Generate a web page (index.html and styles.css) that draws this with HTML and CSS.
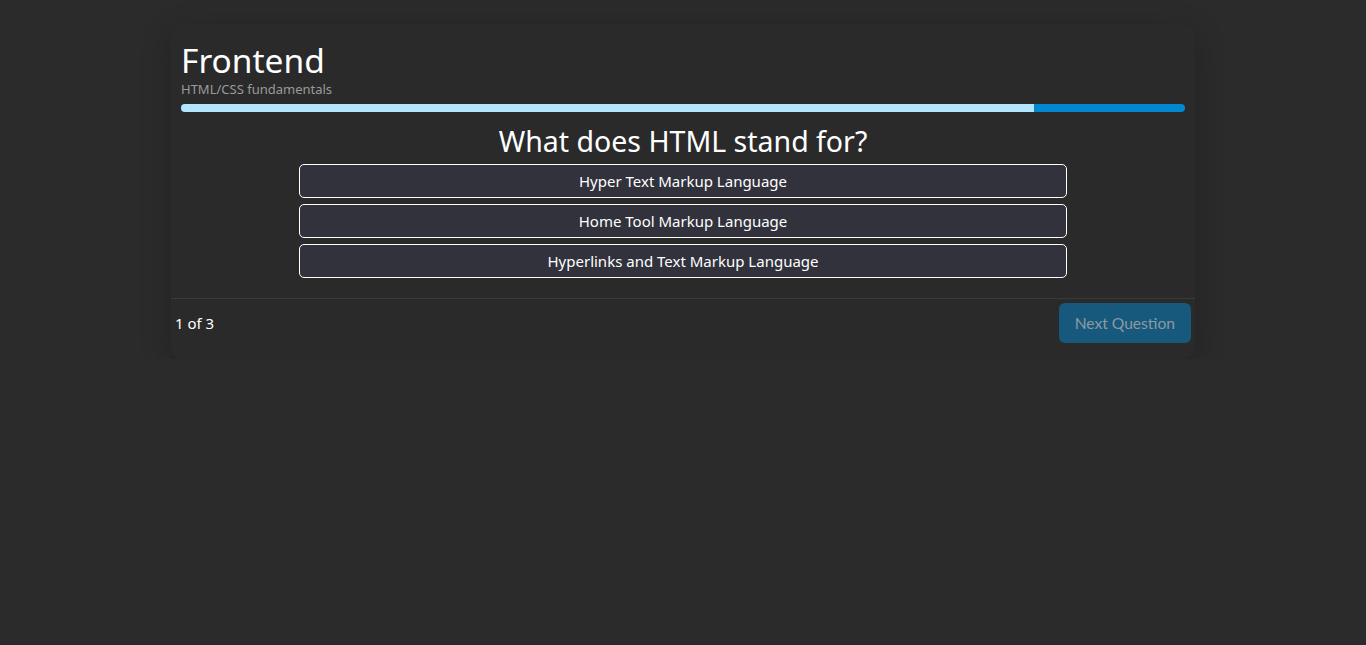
FILE: index.html
```html
<!DOCTYPE html>
<html lang="en">
<head>
<meta charset="utf-8">
<title>Quiz</title>
<link rel="stylesheet" href="styles.css">
</head>
<body>
<main class="card">
  <header class="head">
    <h1 class="title">Frontend</h1>
    <p class="subtitle">HTML/CSS fundamentals</p>
    <div class="progress"><div class="progress-fill" style="width:85%"></div></div>
  </header>
  <section class="question">
    <h2 class="q-text">What does HTML stand for?</h2>
    <div class="options">
      <button class="option">Hyper Text Markup Language</button>
      <button class="option">Home Tool Markup Language</button>
      <button class="option">Hyperlinks and Text Markup Language</button>
    </div>
  </section>
  <footer class="foot">
    <span class="count">1 of 3</span>
    <button class="next" disabled>Next Question</button>
  </footer>
</main>
</body>
</html>
```
FILE: styles.css
```css
* { box-sizing: border-box; }
html, body { margin: 0; }
body {
  background: #2b2b2b;
  font-family: "Noto Sans", "Open Sans", sans-serif;
  color: #fff;
  padding-top: 24px;
}
.card {
  width: 1024px;
  margin: 0 auto;
  background: #2a2a2a;
  border-radius: 12px;
  box-shadow: 0 8px 32px rgba(0,0,0,0.2);
  padding-top: 16px;
}
.head { padding: 0 10px; }
.title {
  margin: 0;
  font-size: 33.5px;
  font-weight: 400;
  line-height: 40px;
}
.subtitle {
  margin: 0;
  font-size: 13px;
  line-height: 16px;
  color: #9a9a9a;
  margin-top: 1px;
}
.progress {
  margin-top: 7px;
  height: 8px;
  border-radius: 4px;
  background: #0288d1;
  overflow: hidden;
}
.progress-fill {
  height: 100%;
  background: #b3e5fc;
}
.question {
  display: flex;
  flex-direction: column;
  align-items: center;
  padding-bottom: 20px;
}
.q-text {
  margin: 9px 0 0;
  font-size: 28.5px;
  font-weight: 400;
  line-height: 40px;
}
.options {
  width: 768px;
  display: flex;
  flex-direction: column;
  gap: 6px;
  margin-top: 3px;
}
.option {
  height: 34px;
  background: #32323c;
  border: 1px solid #fff;
  border-radius: 5px;
  color: #fff;
  font-family: inherit;
  font-size: 15px;
  padding: 0;
}
.foot {
  border-top: 1px solid #3a3a3a;
  display: flex;
  justify-content: space-between;
  align-items: center;
  padding: 4px 4px 16px 4px;
}
.count { font-size: 15px; }
.next {
  height: 40px;
  padding: 0 16px;
  background: #16597d;
  border: none;
  border-radius: 6px;
  color: #8b9aa3;
  font-family: Lato, "Noto Sans", sans-serif;
  font-size: 15.6px;
}
```
